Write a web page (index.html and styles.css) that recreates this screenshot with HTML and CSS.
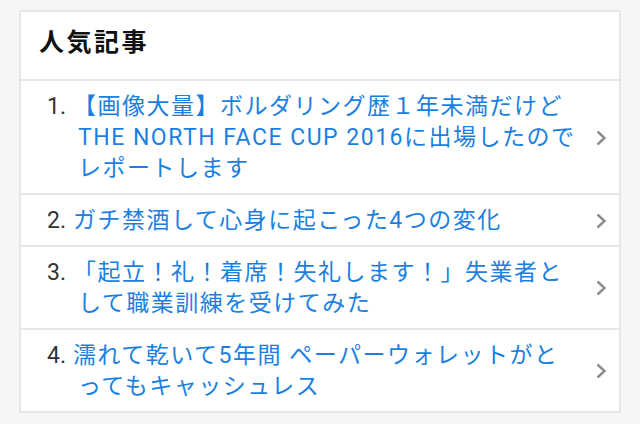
FILE: index.html
```html
<!DOCTYPE html>
<html lang="ja">
<head>
    <meta charset="UTF-8">
    <meta name="viewport" content="width=device-width, initial-scale=1.0">
    <title>人気記事</title>
    <link rel="stylesheet" href="styles.css">
</head>
<body>

    <div class="ranking">
        <h2 class="ranking-title">人気記事</h2>
        <ul class="ranking-list">
            <li>
                <a class="ranking-item" href="#">
                    <span class="ranking-text"><span class="num">1.</span>【画像大量】ボルダリング歴１年未満だけどTHE NORTH FACE CUP 2016に出場したのでレポートします</span>
                    <svg class="chevron" viewBox="0 0 10 16"><polyline points="1.5,1.5 8.5,8 1.5,14.5"/></svg>
                </a>
            </li>
            <li>
                <a class="ranking-item" href="#">
                    <span class="ranking-text"><span class="num">2.</span>ガチ禁酒して心身に起こった4つの変化</span>
                    <svg class="chevron" viewBox="0 0 10 16"><polyline points="1.5,1.5 8.5,8 1.5,14.5"/></svg>
                </a>
            </li>
            <li>
                <a class="ranking-item" href="#">
                    <span class="ranking-text"><span class="num">3.</span>「起立！礼！着席！失礼します！」失業者として職業訓練を受けてみた</span>
                    <svg class="chevron" viewBox="0 0 10 16"><polyline points="1.5,1.5 8.5,8 1.5,14.5"/></svg>
                </a>
            </li>
            <li>
                <a class="ranking-item" href="#">
                    <span class="ranking-text"><span class="num">4.</span>濡れて乾いて5年間 ペーパーウォレットがとってもキャッシュレス</span>
                    <svg class="chevron" viewBox="0 0 10 16"><polyline points="1.5,1.5 8.5,8 1.5,14.5"/></svg>
                </a>
            </li>
        </ul>
    </div>

</body>
</html>
```

FILE: styles.css
```css
body {
    font-family: Roboto, "Noto Sans CJK JP", sans-serif;
    background-color: #f6f6f6;
    color: #333;
    margin: 0;
    padding: 10px 19px;
}

.ranking {
    background-color: #ffffff;
    border: 2px solid #e6e6e6;
}

.ranking-title {
    margin: 0;
    padding: 15px 18px 21px;
    font-size: 25px;
    line-height: 31px;
    letter-spacing: 2.5px;
    font-weight: bold;
    color: #111;
}

.ranking-list {
    list-style: none;
    margin: 0;
    padding: 0;
}

.ranking-list li {
    border-top: 2px solid #e6e6e6;
}

.ranking-item {
    display: flex;
    align-items: center;
    padding: 10px 13px 9px 57px;
    text-decoration: none;
    color: #1b7fe2;
    font-size: 23px;
    line-height: 31px;
    letter-spacing: 1.5px;
}

.ranking-text {
    flex: 1;
    text-indent: -31px;
}

.num {
    display: inline-block;
    width: 26px;
    text-indent: 0;
    letter-spacing: 0;
    color: #333;
}

.chevron {
    flex: none;
    width: 10px;
    height: 16px;
    margin-left: 15px;
    fill: none;
    stroke: #8c8c8c;
    stroke-width: 2.4;
}
```
